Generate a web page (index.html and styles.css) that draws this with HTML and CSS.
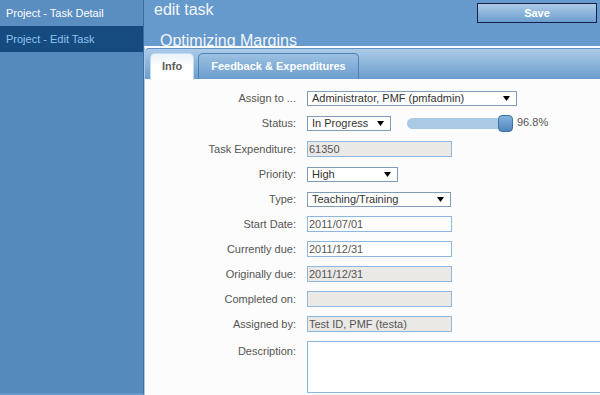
FILE: index.html
```html
<!DOCTYPE html>
<html>
<head>
<meta charset="utf-8">
<link rel="stylesheet" href="styles.css">
</head>
<body>
<div class="app">
  <aside class="sidebar">
    <div class="nav-item">Project - Task Detail</div>
    <div class="nav-item active">Project - Edit Task</div>
  </aside>
  <main class="main">
    <header class="header">
      <div class="header-top">
        <h1 class="title">edit task</h1>
        <button class="save">Save</button>
      </div>
      <h2 class="subtitle">Optimizing Margins</h2>
    </header>
    <section class="panel">
      <div class="tabs">
        <div class="tab active">Info</div>
        <div class="tab">Feedback &amp; Expenditures</div>
      </div>
      <div class="form">
        <label class="label">Assign to ...</label>
        <div class="field select w-assign"><span>Administrator, PMF (pmfadmin)</span><svg class="arrow" width="7" height="5" viewBox="0 0 7 5"><path d="M0 0H7L3.5 5Z"/></svg></div>

        <label class="label">Status:</label>
        <div class="status">
          <div class="field select w-status"><span>In Progress</span><svg class="arrow" width="7" height="5" viewBox="0 0 7 5"><path d="M0 0H7L3.5 5Z"/></svg></div>
          <div class="slider"><div class="track"><div class="handle"></div></div></div>
          <span class="percent">96.8%</span>
        </div>

        <label class="label">Task Expenditure:</label>
        <div class="field input ro w-input">61350</div>

        <label class="label">Priority:</label>
        <div class="field select w-priority"><span>High</span><svg class="arrow" width="7" height="5" viewBox="0 0 7 5"><path d="M0 0H7L3.5 5Z"/></svg></div>

        <label class="label">Type:</label>
        <div class="field select w-type"><span>Teaching/Training</span><svg class="arrow" width="7" height="5" viewBox="0 0 7 5"><path d="M0 0H7L3.5 5Z"/></svg></div>

        <label class="label">Start Date:</label>
        <div class="field input w-input">2011/07/01</div>

        <label class="label">Currently due:</label>
        <div class="field input w-input">2011/12/31</div>

        <label class="label">Originally due:</label>
        <div class="field input ro w-input">2011/12/31</div>

        <label class="label">Completed on:</label>
        <div class="field input ro w-input"></div>

        <label class="label">Assigned by:</label>
        <div class="field input ro w-input">Test ID, PMF (testa)</div>

        <label class="label label-top">Description:</label>
        <div class="textarea"></div>
      </div>
    </section>
  </main>
</div>
</body>
</html>
```
FILE: styles.css
```css
html, body {
  margin: 0;
  padding: 0;
  height: 100%;
  overflow: hidden;
}
body {
  font-family: "Liberation Sans", Arial, sans-serif;
  background: #6699cc;
}
.app {
  display: flex;
  height: 395px;
}
.sidebar {
  width: 144px;
  flex: none;
  background: #558abd;
  border-right: 1px solid #3a6ea5;
  border-bottom: 2px solid #6498cb;
  box-sizing: border-box;
}
.nav-item {
  height: 26px;
  line-height: 26px;
  padding-left: 6px;
  font-size: 11px;
  color: #ffffff;
  background: #5a8dc0;
}
.nav-item.active {
  background: #164b7f;
  color: #8fc3f2;
}
.main {
  flex: 1;
  min-width: 0;
  display: flex;
  flex-direction: column;
  background: #6699cc;
}
.header {
  height: 46px;
  flex: none;
  overflow: hidden;
  padding-left: 10px;
}
.header-top {
  display: flex;
  justify-content: space-between;
  align-items: flex-start;
  height: 32px;
}
.title {
  margin: 0;
  padding-top: 1px;
  font-size: 16px;
  line-height: 18px;
  font-weight: normal;
  color: #f3f7fb;
}
.save {
  margin: 3px 3px 0 0;
  width: 120px;
  height: 20px;
  padding: 0;
  border: 1px solid #16214a;
  background: linear-gradient(#adcbe7, #6b9dce);
  color: #ffffff;
  font: bold 11px "Liberation Sans", Arial, sans-serif;
}
.subtitle {
  margin: 0 0 0 6px;
  font-size: 16px;
  line-height: 18px;
  font-weight: normal;
  color: #f3f7fb;
}
.panel {
  flex: 1;
  overflow: hidden;
  background: #fbfcfb;
  border-top: 2px solid #ffffff;
  border-left: 1px solid #a9c9e8;
}
.tabs {
  height: 30px;
  border-top: 1px solid #5e92c5;
  border-top-left-radius: 4px;
  background: linear-gradient(#abcbe7, #6c9ecd);
  display: flex;
  align-items: flex-end;
  gap: 4px;
  padding-left: 5px;
}
.tab {
  height: 26px;
  box-sizing: border-box;
  padding: 0 12px;
  line-height: 25px;
  font-size: 11px;
  font-weight: bold;
  color: #ffffff;
  border: 1px solid #4f81b4;
  border-bottom: none;
  border-radius: 5px 5px 0 0;
  background: linear-gradient(#9cc1e2, #6b9dcd);
}
.tab.active {
  height: 27px;
  margin-bottom: -1px;
  padding: 0 11px;
  color: #5a5a5a;
  border-color: #c3daef;
  background: linear-gradient(#e9f1f9, #ffffff 45%);
}
.form {
  display: grid;
  grid-template-columns: 151px auto;
  grid-auto-rows: minmax(16px, auto);
  column-gap: 11px;
  row-gap: 9px;
  align-items: center;
  padding-top: 11px;
}
.label {
  text-align: right;
  font-size: 11px;
  line-height: 13px;
  color: #555555;
}
.label-top {
  align-self: start;
  padding-top: 4px;
}
.field {
  height: 16px;
  box-sizing: border-box;
  border: 1px solid #8db7dc;
  font-size: 11px;
  line-height: 14px;
  color: #555555;
  background: #ffffff;
  white-space: nowrap;
  overflow: hidden;
}
.input {
  padding: 0 1px;
}
.ro {
  background: #ebe9e6;
}
.select {
  height: 15px;
  line-height: 13px;
  border-color: #7f9db9;
  color: #333333;
  display: flex;
  align-items: center;
  justify-content: space-between;
  padding: 0 6px 0 4px;
}
.arrow {
  flex: none;
  fill: #000000;
}
.w-assign { width: 210px; }
.w-status { width: 84px; }
.w-priority { width: 91px; }
.w-type { width: 144px; }
.w-input { width: 145px; }
.status {
  display: flex;
  align-items: center;
}
.slider {
  margin-left: 16px;
  width: 106px;
  height: 17px;
  display: flex;
  align-items: center;
}
.track {
  width: 100px;
  height: 11px;
  border-radius: 6px;
  background: #a9c9e4;
  display: flex;
  justify-content: flex-end;
  align-items: center;
}
.handle {
  flex: none;
  width: 15px;
  height: 17px;
  box-sizing: border-box;
  margin-right: -6px;
  border: 1px solid #3f71a2;
  border-radius: 4px;
  background: linear-gradient(#84b2dd, #5286bc);
}
.percent {
  margin-left: 4px;
  margin-top: -4px;
  font-size: 11px;
  color: #555555;
}
.textarea {
  width: 320px;
  height: 52px;
  box-sizing: border-box;
  border: 1px solid #8db7dc;
  background: #ffffff;
}
```
